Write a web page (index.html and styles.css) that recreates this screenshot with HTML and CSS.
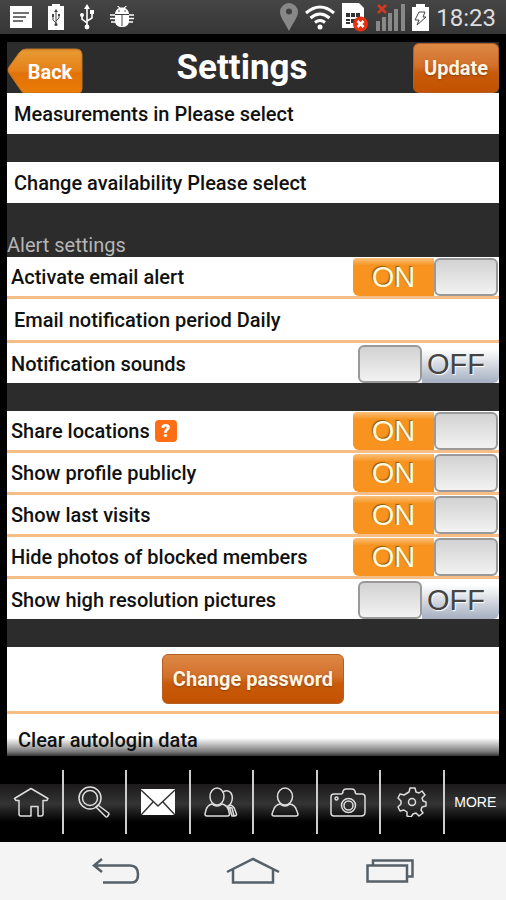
FILE: index.html
```html
<!DOCTYPE html>
<html lang="en">
<head>
<meta charset="utf-8">
<meta name="viewport" content="width=device-width, initial-scale=1">
<title>Settings</title>
<link rel="stylesheet" href="styles.css">
</head>
<body>
<div class="phone">
  <div class="status">
    <div class="status-left">
      <svg width="22" height="24" viewBox="0 0 22 24"><path fill="#fff" d="M0 1h22v22H0z"/><path stroke="#444" stroke-width="1.5" d="M3 8h16M3 12h13M3 16h10"/></svg>
      <svg width="16" height="26" viewBox="0 0 16 26"><path fill="#fff" d="M4 0h8v2h4v24H0V2h4z"/><path fill="none" stroke="#444" d="M8 21V7M8 19l-3-3v-4M8 17l3-3v-3"/><path fill="#444" d="M8 5l2 3H6zM4 10h2v3H4zM10 10h2v2h-2z"/><circle cx="8" cy="20.500" r="1.500" fill="#444"/></svg>
      <svg width="14" height="26" viewBox="0 0 14 26"><path fill="none" stroke="#fff" stroke-width="1.6" d="M7 22V4M7 19l-5-4v-4M7 17l5-3v-5"/><path fill="#fff" d="M7 0l3 5H4zM10 6h4v4h-4z"/><circle cx="2" cy="11" r="2" fill="#fff"/><circle cx="7" cy="23" r="2.400" fill="#fff"/></svg>
      <svg width="24" height="22" viewBox="0 0 24 22"><path fill="#fff" d="M5 8c0-3 2-5 4-6L7 0l1-.5L10 1.500h4L16-.5l1 .5-2 2c2 1 4 3 4 6z"/><path fill="#fff" d="M5 9h14v6c0 4-3 6-7 6s-7-2-7-6z"/><path fill="none" stroke="#fff" stroke-width="1.600" d="M5 9H0M5 12.500H0M5 16H1M19 9h5M19 12.500h5M19 16h4"/><path stroke="#444" d="M12 9v11"/><circle cx="9" cy="5" r=".8" fill="#444"/><circle cx="15" cy="5" r=".8" fill="#444"/></svg>
    </div>
    <div class="status-right">
      <svg width="18" height="28" viewBox="0 0 18 28"><path fill="#888" fill-rule="evenodd" d="M9 0a9 9 0 0 1 9 9c0 5-5 11-9 19C5 20 0 14 0 9a9 9 0 0 1 9-9zm0 5.500a3 3 0 1 0 0 6 3 3 0 0 0 0-6z"/></svg>
      <svg width="30" height="26" viewBox="0 0 30 26"><path fill="none" stroke="#fff" stroke-width="3" d="M1 9q14-12 28 0M5.500 14q9.500-8 19 0M10 18.500q5-4 10 0"/><circle cx="15" cy="23" r="2.500" fill="#fff"/></svg>
      <svg width="27" height="30" viewBox="0 0 27 30"><path fill="#fff" d="M0 1h17l5 5v20H0z"/><path fill="#333" d="M4 11h4v4H4zM9 11h4v4H9zM14 11h4v4h-4zM4 17h4v2H4zM9 17h4v4H9zM4 20h4v2H4z"/><circle cx="18.500" cy="22" r="7.500" fill="#e83010"/><path stroke="#fff" stroke-width="2.500" d="M15.500 19l6 6M21.500 19l-6 6"/></svg>
      <svg width="29" height="28" viewBox="0 0 29 28"><path fill="#888" d="M0 18h4v10H0zM6 14h4v14H6zM12 10h4v18h-4zM18 6h4v22h-4zM25 1h4v27h-4z"/><path stroke="#d43a20" stroke-width="2.500" d="M2 2l8 8M10 2l-8 8"/></svg>
      <svg width="17" height="27" viewBox="0 0 17 27"><path fill="#fff" d="M4 0h9v3h4v24H0V3h4z"/><path fill="none" stroke="#444" stroke-width="1" d="M7 8h6l-2 5h3L5 21l2-5H3z"/></svg>
      <time class="clock">18:23</time>
    </div>
  </div>

  <main class="screen">
    <header class="header">
      <button class="back" type="button">
        <svg class="back-shape" width="76" height="46" viewBox="0 0 76 46"><defs><linearGradient id="backFill" x1="0" y1="0" x2="0" y2="1"><stop offset="0" stop-color="#d98d2e"/><stop offset=".08" stop-color="#e8972f"/><stop offset=".5" stop-color="#e58018"/><stop offset=".55" stop-color="#e27208"/><stop offset="1" stop-color="#ea7c05"/></linearGradient></defs><path fill="url(#backFill)" stroke="#bd7424" stroke-width="1" d="M19 2h50q6 0 6 6v34q0 4-4 4H18q-3 0-5-4L2 26q-2-3 0-6L12 6q3-4 7-4z"/></svg>
        <span class="back-text">Back</span>
      </button>
      <h1 class="title">Settings</h1>
      <button class="action update" type="button">Update</button>
    </header>

    <section class="group">
      <div class="row choice">
        <label for="units">Measurements in</label>
        <select id="units"><option>Please select</option></select>
      </div>
    </section>
    <section class="group">
      <div class="row choice">
        <label for="availability">Change availability</label>
        <select id="availability"><option>Please select</option></select>
      </div>
    </section>

    <h2 class="group-title">Alert settings</h2>
    <section class="group">
      <div class="row"><label for="email">Activate email alert</label><label class="toggle"><span class="on">ON</span><input id="email" type="checkbox" checked><span class="off">OFF</span></label></div>
      <div class="row choice">
        <label for="period">Email notification period</label>
        <select id="period"><option>Daily</option></select>
      </div>
      <div class="row"><label for="sounds">Notification sounds</label><label class="toggle"><span class="on">ON</span><input id="sounds" type="checkbox"><span class="off">OFF</span></label></div>
    </section>

    <section class="group">
      <div class="row"><label for="locations">Share locations</label><button class="help" type="button">?</button><label class="toggle"><span class="on">ON</span><input id="locations" type="checkbox" checked><span class="off">OFF</span></label></div>
      <div class="row"><label for="profile">Show profile publicly</label><label class="toggle"><span class="on">ON</span><input id="profile" type="checkbox" checked><span class="off">OFF</span></label></div>
      <div class="row"><label for="visits">Show last visits</label><label class="toggle"><span class="on">ON</span><input id="visits" type="checkbox" checked><span class="off">OFF</span></label></div>
      <div class="row"><label for="photos">Hide photos of blocked members</label><label class="toggle"><span class="on">ON</span><input id="photos" type="checkbox" checked><span class="off">OFF</span></label></div>
      <div class="row"><label for="highres">Show high resolution pictures</label><label class="toggle"><span class="on">ON</span><input id="highres" type="checkbox"><span class="off">OFF</span></label></div>
    </section>

    <section class="group account">
      <div class="row password"><button class="action" type="button">Change password</button></div>
      <button class="clear" type="button">Clear autologin data</button>
    </section>
  </main>

  <nav class="tabs">
    <a class="tab" href="#home"><svg width="36" height="30" viewBox="0 0 36 30"><path d="M18 1.500L1.500 11.500l1.500 2h3V27q0 2 2 2h10V19.500h7V29h3q2 0 2-2V13.500h4l1-2z"/></svg></a>
    <a class="tab" href="#search"><svg width="32" height="32" viewBox="0 0 32 32"><circle cx="12" cy="12" r="11"/><circle cx="12" cy="12" r="7.500"/><path d="M18 21l2-2 10.500 8q1 1 0 2l-1 1.500q-1 1-2 0z"/></svg></a>
    <a class="tab" href="#mail"><svg width="34" height="26" viewBox="0 0 34 26"><path class="solid" d="M0 0h34v26H0z"/><path class="ink" d="M0 1l17 16L34 1M0 26l12-13M34 26L22 13"/></svg></a>
    <a class="tab" href="#friends"><svg width="34" height="30" viewBox="0 0 34 30"><ellipse cx="13" cy="9.500" rx="7" ry="8.500"/><path d="M8 17q5 4 10 0 5 1 6.500 6l1 4q0 2-2 2H3q-2 0-2-2l1-4q1.500-5 6-6zM19 5q5-3 8 1 3 5-.5 11-3 4-6 1M26 18q4 1 5 5l1.500 4q0 2-2 2H28l-2-7-3-3M25 20l3 1 2 8"/></svg></a>
    <a class="tab" href="#me"><svg width="28" height="30" viewBox="0 0 28 30"><ellipse cx="14" cy="9.500" rx="7.500" ry="8.500"/><path d="M9 17q5 4 10 0 5 1 6.500 6l1.500 4q0 2-2 2H3q-2 0-2-2l1.500-4Q4 18 9 17z"/></svg></a>
    <a class="tab" href="#camera"><svg width="36" height="29" viewBox="0 0 36 29"><path d="M4 6h7q2 0 2-3 1-2 3-2h6q2 0 3 2 0 3 2 3h5q3 0 3 3v15q0 4-4 4H4q-3 0-3-3V9q0-3 3-3z"/><circle cx="18.500" cy="17.500" r="7"/><circle cx="18.500" cy="17.500" r="4.500"/><circle cx="6.500" cy="10.500" r="1.500"/></svg></a>
    <a class="tab" href="#settings"><svg width="30" height="30" viewBox="0 0 30 30"><path d="M12 5l1-4h5l1 4 3 1 3-2 3 4-3 3 1 3 3 1v4l-4 1-1 3 2 3-4 3-3-3-3 1-2 3-4-1v-4l-3-2-4 1-2-4 3-3v-3L1 11l2-4 4 1z"/><circle cx="15" cy="15" r="3.500"/></svg></a>
    <a class="tab" href="#more">MORE</a>
  </nav>

  <div class="softkeys">
    <button type="button" aria-label="Back"><svg width="48" height="28" viewBox="0 0 48 28"><path d="M10 2L2 8.500 10 15M2 8.500h36q8 0 8 9t-8 8H11"/></svg></button>
    <button type="button" aria-label="Home"><svg width="54" height="28" viewBox="0 0 54 28"><path d="M1 15L27 2l26 13M7 12v13.500h40V12"/></svg></button>
    <button type="button" aria-label="Recent"><svg width="48" height="24" viewBox="0 0 48 24"><path d="M1.500 6.500h39.500v16H1.500zM7 6.500V1.500h39.500v16H41"/></svg></button>
  </div>
</div>
</body>
</html>
```
FILE: styles.css
```css
* { box-sizing: border-box; }

body {
  margin: 0;
  background: #000;
  font-family: Roboto, "Liberation Sans", sans-serif;
}

button, select, input {
  margin: 0;
  padding: 0;
  border: 0;
  font: inherit;
  color: inherit;
}

svg { display: block; }

.phone {
  display: flex;
  flex-direction: column;
  min-height: 100vh;
}

/* Status bar */
.status {
  display: flex;
  justify-content: space-between;
  align-items: center;
  height: 34px;
  margin-bottom: 8px;
  padding: 0 10px;
  background: linear-gradient(#454545, #363636);
}

.status-left { display: flex; align-items: center; gap: 16px; }
.status-right { display: flex; align-items: center; gap: 7px; }
.clock { padding-top: 3px; color: #ddd; font-size: 24px; line-height: 31px; }

/* Settings screen */
.screen {
  margin: 0 7px;
  background: #2c2c2c;
  font-size: 20px;
  font-weight: 500;
  line-height: 24px;
}

.header {
  display: flex;
  align-items: center;
  justify-content: space-between;
  height: 51px;
  color: #fff;
}

.back {
  display: grid;
  align-self: end;
  background: none;
  font-weight: 700;
}
.back-shape, .back-text { grid-area: 1 / 1; }
.back-text { align-self: center; padding: 4px 0 0 10px; }

.title { margin: 0; padding-right: 12px; font-size: 35px; font-weight: 700; line-height: 50px; }

.action {
  height: 50px;
  padding: 0 10px;
  border: 1px solid #b35f24;
  border-radius: 6px;
  background: linear-gradient(#dd8845, #d2702b 45%, #c85a09 60%, #c35200);
  color: #fff5e4;
  font-weight: 700;
  text-shadow: 0 1px 2px #8a4210;
}

.group { margin-bottom: 28px; background: #fff; color: #111; }

.group-title {
  margin: 0;
  padding-top: 2px;
  color: #b5b5b5;
  font-size: 20px;
  font-weight: 400;
  line-height: 24px;
}

.row {
  display: flex;
  align-items: center;
  height: 42px;
  padding: 1px 0 0 4px;
  border-bottom: 3px solid #f6bd86;
}
.row:last-child { height: 40px; border-bottom: 0; }
.choice { gap: 5px; height: 44px; padding-left: 7px; }
.choice:last-child { height: 41px; }
.choice select { appearance: none; background: none; }

.help {
  width: 22px;
  height: 22px;
  margin-left: 5px;
  border-radius: 4px;
  background: #ff6d14;
  color: #fff;
  font-size: 18px;
  font-weight: 900;
  line-height: 22px;
}

/* Switches: the check box is the knob */
.toggle {
  display: flex;
  align-items: stretch;
  height: 38px;
  margin-left: auto;
  font: 29px/38px "Liberation Sans", sans-serif;
}
.toggle input {
  appearance: none;
  width: 64px;
  border: 2px solid #999;
  border-radius: 6px;
  background: linear-gradient(#d2d2d2, #f2f2f2);
}
.toggle input:checked { margin-right: 1px; }
.on {
  width: 81px;
  border-radius: 4px 0 0 6px;
  background: linear-gradient(#fbc07c, #f7931e 20%);
  color: #fff8dc;
  text-align: center;
  text-shadow: -1px -1px 1px #8a5a10;
}
.off {
  width: 77px;
  padding-left: 5px;
  border-radius: 0 0 6px 0;
  background: linear-gradient(#fff 10%, #a5afc0);
  color: #444;
  text-shadow: 1px 1px 1px #fff;
}
.toggle:has(:checked) .off, .toggle:not(:has(:checked)) .on { display: none; }

.account { margin-bottom: 0; }
.row.password { justify-content: center; height: 67px; padding: 0; }
.clear {
  display: block;
  width: 100%;
  height: 42px;
  padding: 10px 11px 0;
  background: linear-gradient(#fff 24px, #777 38px, #333);
  text-align: left;
}

/* Tab bar */
.tabs {
  display: flex;
  height: 64px;
  margin: 14px 0 8px;
}
.tab {
  flex: 1;
  display: flex;
  align-items: center;
  justify-content: center;
  background: linear-gradient(#000 14px, #1c1a1b 14px, #343434 34px, #000 52px);
  color: #fff;
  font: 14px/20px "Liberation Sans", sans-serif;
  text-decoration: none;
}
.tab + .tab { border-left: 2px solid #ccc; }
.tab svg { fill: none; stroke: #ddd; stroke-width: 1.5; stroke-linejoin: round; }
.tab .solid { fill: #fff; stroke: none; }
.tab .ink { stroke: #333; }

/* System keys */
.softkeys {
  flex: 1;
  display: flex;
  justify-content: center;
  align-items: center;
  gap: 86px;
  min-height: 58px;
  background: #f4f4f4;
}
.softkeys button { background: none; }
.softkeys svg { fill: none; stroke: #566068; stroke-width: 2.5; }
```
